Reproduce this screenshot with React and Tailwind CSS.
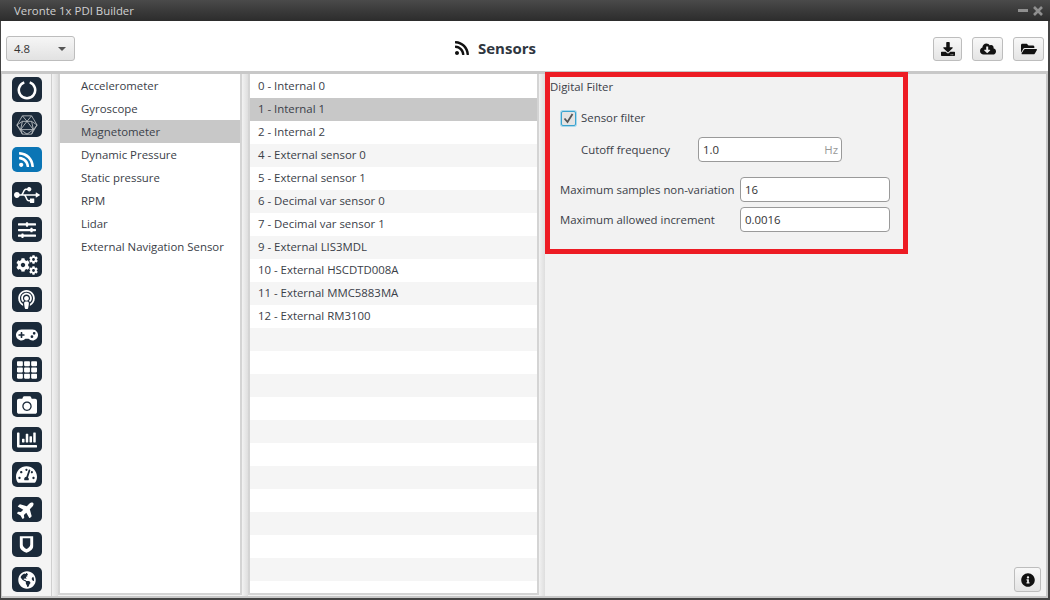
import { FaRss, FaUsb, FaSlidersH, FaCog, FaPodcast, FaGamepad, FaTh, FaCamera, FaChartBar, FaTachometerAlt, FaPlane, FaGlobeAmericas, FaDownload, FaCloudDownloadAlt, FaFolderOpen, FaInfoCircle } from 'react-icons/fa';

const categories = ['Accelerometer', 'Gyroscope', 'Magnetometer', 'Dynamic Pressure', 'Static pressure', 'RPM', 'Lidar', 'External Navigation Sensor'];

const sensors = ['0 - Internal 0', '1 - Internal 1', '2 - Internal 2', '4 - External sensor 0', '5 - External sensor 1', '6 - Decimal var sensor 0', '7 - Decimal var sensor 1', '9 - External LIS3MDL', '10 - External HSCDTD008A', '11 - External MMC5883MA', '12 - External RM3100', '', '', '', '', '', '', '', '', '', '', ''];

const RingIcon = () => (
    <svg width="20" height="20" viewBox="0 0 22 22" fill="none" stroke="white" strokeWidth="2.8">
        <path d="M8 2.6 A9 9 0 1 0 14 2.6" />
    </svg>
);

const HexIcon = () => (
    <svg width="24" height="22" viewBox="0 0 24 24" fill="none" stroke="#c4c7ca" strokeWidth="0.9">
        <path d="M7 2 H17 L23 12 L17 22 H7 L1 12 Z" />
        <path d="M7 2 L12 8 L17 2 M1 12 L7 8 H17 L23 12 M7 8 L5 17 L12 22 L19 17 L17 8 M1 12 L5 17 M23 12 L19 17 M12 8 L5 17 M12 8 L19 17 M5 17 H19 M7 22 L5 17 M17 22 L19 17" />
    </svg>
);

const ShieldIcon = () => (
    <svg width="15" height="19" viewBox="0 0 18 22" fill="white">
        <path d="M1 1 H17 V13 C17 17 13 19 9 21 C5 19 1 17 1 13 Z M4.5 3.5 H13.5 V11 C13.5 13.5 11.5 15 9 16.5 C6.5 15 4.5 13.5 4.5 11 Z" fillRule="evenodd" />
    </svg>
);

const CogsIcon = () => (
    <svg width="22" height="20" viewBox="0 0 22 20" fill="white" color="white">
        <FaCog x="0" y="3" size="14" />
        <FaCog x="13" y="0" size="9" />
        <FaCog x="13" y="11" size="9" />
    </svg>
);

const railIcons = [
    { icon: <RingIcon /> },
    { icon: <HexIcon /> },
    { icon: <FaRss size={17} color="white" />, active: true },
    { icon: <FaUsb size={26} color="white" /> },
    { icon: <FaSlidersH size={18} color="white" /> },
    { icon: <CogsIcon /> },
    { icon: <FaPodcast size={19} color="white" /> },
    { icon: <FaGamepad size={22} color="white" /> },
    { icon: <FaTh size={20} color="white" /> },
    { icon: <FaCamera size={20} color="white" /> },
    { icon: <FaChartBar size={20} color="white" /> },
    { icon: <FaTachometerAlt size={21} color="white" /> },
    { icon: <FaPlane size={19} color="white" className="-rotate-45" /> },
    { icon: <ShieldIcon /> },
    { icon: <FaGlobeAmericas size={18} color="white" /> },
];

const ToolButton = ({ children, className }) => (
    <button className={`flex items-center justify-center h-6 rounded-[3px] border border-[#bdbdbd] bg-gradient-to-b from-[#f8f8f8] to-[#e4e4e4] text-[#111] ${className}`}>
        {children}
    </button>
);

const TextBox = ({ value, className, suffix }) => (
    <div className={`flex items-center justify-between h-[25px] rounded-[4px] border border-[#9a9a9a] bg-white pl-[4px] pr-[3px] text-[#333] ${className}`}>
        <span>{value}</span>
        {suffix && <span className="text-[#999]">{suffix}</span>}
    </div>
);

const Gutter = () => (
    <div className="w-[6px] bg-gradient-to-r from-[#f2f2f2] to-[#dedede]"></div>
);

const App = () => {
    return (
        <div className="relative flex flex-col w-[1050px] h-[600px] overflow-hidden bg-[#c8c8c8] text-[11.4px] text-[#3a4048] font-['Open_Sans',sans-serif]">

            {/* Title bar */}
            <div className="flex items-center justify-between h-[21px] pl-[14px] pr-[7px] bg-gradient-to-b from-[#4a4a4a] to-[#2c2c2c] text-[#d0d0d0]">
                <span>Veronte 1x PDI Builder</span>
                <div className="flex items-center gap-[5px]">
                    <div className="w-[10px] h-[3px] bg-[#8f8f8f]"></div>
                    <svg width="10" height="10" viewBox="0 0 10 10" stroke="#8f8f8f" strokeWidth="2.6">
                        <path d="M1 1 L9 9 M9 1 L1 9" />
                    </svg>
                </div>
            </div>

            <div className="flex flex-col flex-1 min-h-0 border-l border-r-2 border-b-2 border-[#444]">

                {/* Toolbar */}
                <div className="relative flex items-center justify-between h-[50px] pt-[5px] pl-[5px] pr-[4px] bg-white">
                    <button className="flex items-center justify-between w-[69px] h-[25px] rounded-[3px] border border-[#bdbdbd] bg-gradient-to-b from-[#f6f6f6] to-[#e2e2e2] pl-[7px] pr-[8px] text-[#333]">
                        <span>4.8</span>
                        <span className="w-0 h-0 border-x-[4px] border-x-transparent border-t-[4px] border-t-[#555]"></span>
                    </button>
                    <div className="absolute left-[453px] top-[16px] flex items-center gap-[8px]">
                        <FaRss size={16} color="#111" />
                        <span className="text-[15px] font-bold text-[#2f3640]">Sensors</span>
                    </div>
                    <div className="flex gap-[10px]">
                        <ToolButton className="w-[29px]"><FaDownload size={14} /></ToolButton>
                        <ToolButton className="w-[31px]"><FaCloudDownloadAlt size={16} /></ToolButton>
                        <ToolButton className="w-[31px]"><FaFolderOpen size={16} /></ToolButton>
                    </div>
                </div>

                {/* Body */}
                <div className="flex flex-1 min-h-0 pt-[3px] pb-[2px] pl-[1px] pr-[2px] bg-[#c8c8c8]">

                    {/* Icon rail */}
                    <div className="flex flex-col items-center gap-[10px] w-[50px] pt-[3px] bg-[#f4f4f4] border-r border-[#cfcfcf]">
                        {railIcons.map((item, i) => (
                            <div key={i} className={`flex items-center justify-center w-[30px] h-[25px] shrink-0 rounded-[5px] ${item.active ? 'bg-[#0a75b5]' : 'bg-[#1b2a3a]'}`}>
                                {item.icon}
                            </div>
                        ))}
                    </div>

                    <Gutter />

                    {/* Category list */}
                    <div className="w-[184px] pb-[1px] bg-[#f2f2f2]">
                        <div className="h-full border-x-2 border-b-2 border-[#d4d4d4] bg-white">
                            {categories.map((name) => (
                                <div key={name} className={`flex items-center h-[23px] pl-[21px] ${name === 'Magnetometer' ? 'bg-[#c8c8c8]' : ''}`}>
                                    {name}
                                </div>
                            ))}
                        </div>
                    </div>

                    <Gutter />

                    {/* Sensor list */}
                    <div className="w-[291px] pb-[1px] bg-[#f2f2f2]">
                        <div className="h-full pt-[1px] border-x-2 border-b-2 border-[#d4d4d4] bg-white overflow-hidden">
                            {sensors.map((name, i) => (
                                <div key={i} className={`flex items-center h-[23px] pl-[8px] pb-[1px] ${i === 1 ? 'bg-[#c8c8c8]' : i % 2 === 1 ? 'bg-[#f5f5f5]' : 'bg-white'}`}>
                                    {name}
                                </div>
                            ))}
                        </div>
                    </div>

                    <Gutter />

                    {/* Detail panel */}
                    <div className="relative flex-1 flex flex-col bg-[#f2f2f2] pl-[5px] pt-[4px]">
                        <div className="h-[17px] leading-[17px]">Digital Filter</div>
                        <div className="flex items-center gap-[5px] mt-[13px] ml-[11px] h-[20px]">
                            <div className="flex items-center justify-center w-[15px] h-[15px] rounded-[2px] border border-[#3aa3cf] bg-[#e4e4e4] shadow-[0_0_0_1px_#a8d8ec]">
                                <svg width="13" height="13" viewBox="0 0 13 13" fill="none" stroke="#555" strokeWidth="1.8">
                                    <path d="M2.5 6.5 L5.5 10 L10.5 2" />
                                </svg>
                            </div>
                            <span>Sensor filter</span>
                        </div>
                        <div className="flex items-center mt-[9px] ml-[31px]">
                            <span className="w-[117px]">Cutoff frequency</span>
                            <TextBox value="1.0" suffix="Hz" className="w-[144px]" />
                        </div>
                        <div className="flex items-center mt-[15px] ml-[10px]">
                            <span className="w-[180px] whitespace-nowrap">Maximum samples non-variation</span>
                            <TextBox value="16" className="w-[150px]" />
                        </div>
                        <div className="flex items-center mt-[5px] ml-[10px]">
                            <span className="w-[180px] whitespace-nowrap">Maximum allowed increment</span>
                            <TextBox value="0.0016" className="w-[150px]" />
                        </div>

                        {/* info button sits over the panel corner */}
                        <ToolButton className="absolute right-[5px] bottom-[4px] w-[27px] !h-[25px]"><FaInfoCircle size={14} /></ToolButton>
                    </div>
                </div>
            </div>

            {/* Red annotation frame */}
            <div className="absolute left-[545px] top-[72px] w-[363px] h-[182px] border-[5px] border-[#ed1c24] pointer-events-none"></div>
        </div>
    );
};

export default App;
